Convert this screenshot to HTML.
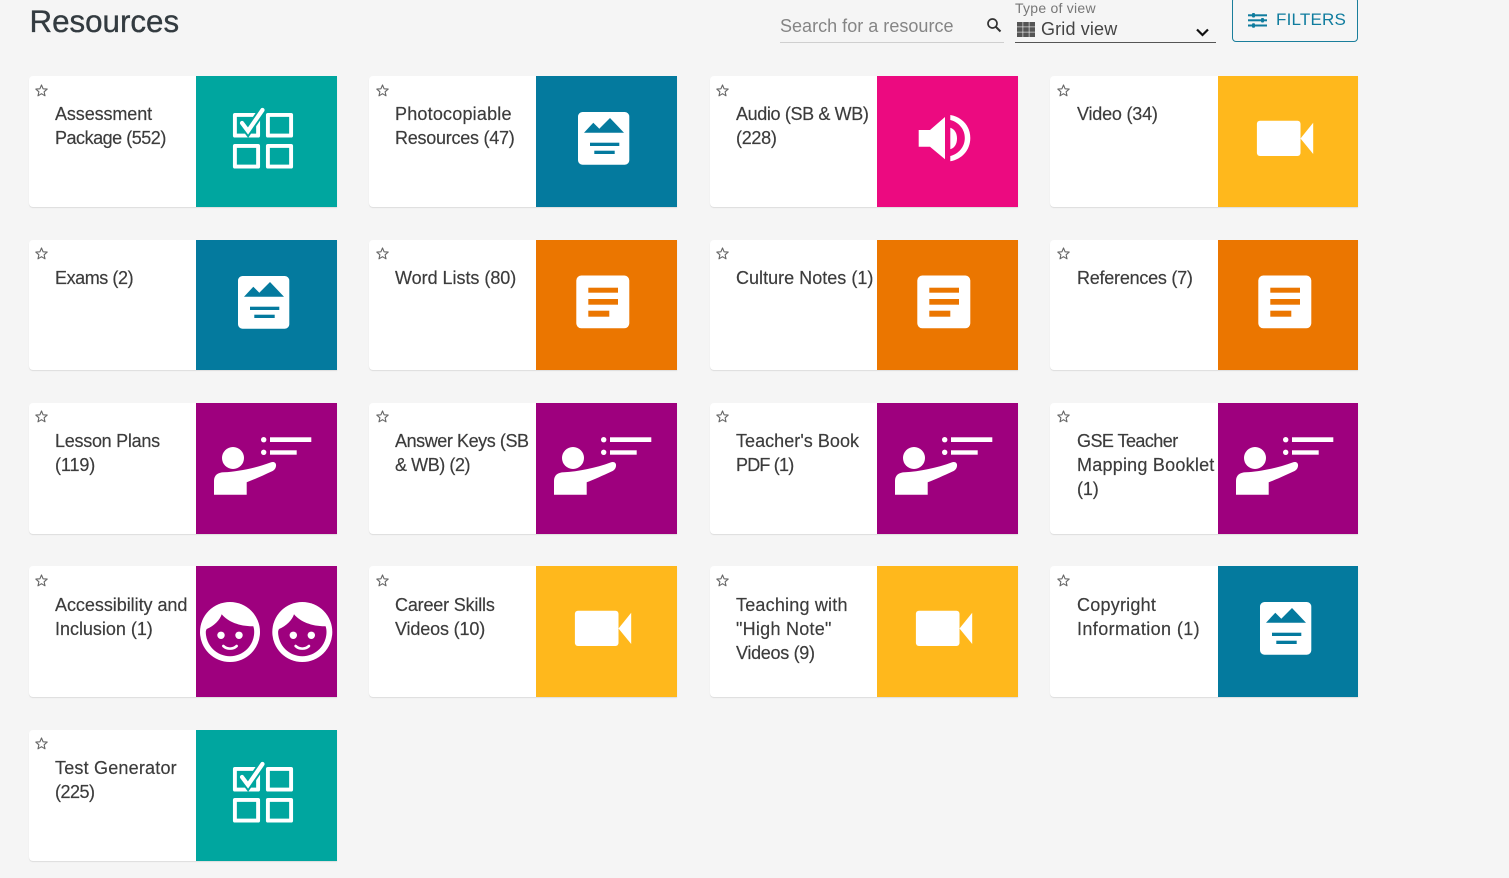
<!DOCTYPE html>
<html lang="en"><head><meta charset="utf-8"><title>Resources</title>
<style>
html,body{margin:0;padding:0;background:#f5f5f5}
body{width:1509px;height:878px;overflow:hidden;position:relative;font-family:"Liberation Sans",sans-serif;color:#3c3c3c}
.abs{position:absolute;white-space:nowrap}
h1{position:absolute;left:29.500px;top:3px;margin:0;font-size:31.300px;line-height:38px;font-weight:400;color:#333b40;white-space:nowrap;-webkit-text-stroke:.35px #333b40}
.card{position:absolute;width:308px;height:131px;background:#fff;border-radius:4px 0 0 4px;box-shadow:0 1px 1px rgba(0,0,0,.1)}
.card svg.star{position:absolute;left:6px;top:8px;width:13px;height:13px}
.up svg.star{top:7px}
.c2 svg.star,.c4 svg.star{left:7px}
.card .t{position:absolute;left:26px;top:26px;font-size:18px;line-height:24px;color:#3c3c3c;white-space:nowrap;-webkit-text-stroke:.18px #3c3c3c}
.c4 .t{left:27px}
.r4 .t{top:27px}
.card .t span{display:block}
.card svg.p{position:absolute;left:167px;top:0;width:141px;height:131px;display:block}
.c4 svg.p{left:168px;width:140px}
.r2{height:130px}
.r2 svg.p{height:130px}
</style></head><body>
<svg width="0" height="0" style="position:absolute">
<defs>
<g id="star"><polygon points="6.500,1 8.100,4.800 12.200,5.100 9.100,7.800 10,11.800 6.500,9.700 3,11.800 3.900,7.800 .8,5.100 4.900,4.800" fill="none" stroke="#666" stroke-width="1.100" stroke-linejoin="round"/></g>
<g id="check"><g fill="none" stroke="#fff" stroke-width="3.900" stroke-linejoin="round"><rect x="38.900" y="38.900" width="23.200" height="20.700"/><rect x="71.900" y="38.900" width="23.200" height="20.700"/><rect x="38.900" y="69.900" width="23.200" height="20.700"/><rect x="71.900" y="69.900" width="23.200" height="20.700"/></g><path d="M46 47l6 8L66.500 34" fill="none" stroke="#00a69f" stroke-width="8"/><path d="M46 47l6 8L66.500 34" fill="none" stroke="#fff" stroke-width="4.200" stroke-linecap="round"/></g>
<g id="photo"><rect x="42" y="36" width="51.300" height="52.700" rx="4.500" fill="#fff"/><path d="M48 56.700L57.300 46.700 63.300 52.700 74 42 88 56.700Z" fill="#047a9e"/><rect x="54" y="66.700" width="29.300" height="3.300" fill="#047a9e"/><rect x="58.300" y="74.700" width="20.400" height="3.300" fill="#047a9e"/></g>
<g id="audio" fill="#fff"><path d="M41.700 54H53L68 41V83.300L53 70.700H41.700Z"/><path d="M73.300 39C85 41 93.300 50 93.300 62S85 83.300 73.300 85.300V80C81.500 78 87.800 71 87.800 62S81.500 46 73.300 44Z"/><path d="M73.300 51.700C77.500 53 80 57 80 62.500S77.500 72 73.300 73.300Z"/></g>
<g id="video" fill="#fff"><rect x="38.900" y="44.700" width="43.600" height="35.300" rx="3"/><path d="M82.500 62.500L95.200 46.700V78Z"/></g>
<g id="doc"><rect x="40.300" y="35.500" width="53" height="52.800" rx="5" fill="#fff"/><g fill="#eb7600"><rect x="52.300" y="47.700" width="29.700" height="5"/><rect x="52.300" y="59" width="29.700" height="5.700"/><rect x="52.300" y="70.700" width="21" height="6"/></g></g>
<g id="teacher" fill="#fff"><circle cx="37" cy="55" r="11"/><path d="M18 91.700V78C18 72 22 69.500 28 69.300C42 68.500 60 65 74.500 59.500C78 58 80.500 60 80 63C79.800 65.500 78 67.500 75.500 68.500C67 72.500 58 76.500 50.700 79.300V91.700Z"/><circle cx="67.700" cy="36.700" r="2.700"/><circle cx="67.700" cy="49.300" r="2.700"/><rect x="74" y="34.300" width="41.300" height="4.700"/><rect x="74" y="47.300" width="26.700" height="4.400"/></g>
<g id="face"><circle cx="34" cy="66" r="30" fill="#fff"/><path d="M10.700 63C18 60 24 54 25.700 48.300C32 56 44 60.500 57.300 60.300C58 62.500 58.200 64 58.200 66A24.200 24.200 0 0 1 9.800 66C9.800 65 10.200 64 10.700 63Z" fill="#9e007e"/><circle cx="25" cy="69.300" r="3.700" fill="#fff"/><circle cx="43" cy="69.300" r="3.700" fill="#fff"/><path d="M27.300 80C31 83.500 37 83.500 40.700 80" fill="none" stroke="#fff" stroke-width="2.600" stroke-linecap="round"/></g>
</defs></svg>

<h1>Resources</h1>

<div class="abs" style="left:780px;top:15px;font-size:18px;line-height:22px;color:#858585;letter-spacing:.02px">Search for a resource</div>
<div class="abs" style="left:780px;top:42px;width:224px;height:1px;background:#cfcfcf"></div>
<svg class="abs" style="left:986px;top:17px" width="16" height="16" viewBox="0 0 16 16"><circle cx="6.500" cy="6.500" r="4.500" fill="none" stroke="#333" stroke-width="1.700"/><path d="M10 10l4.500 4.500" stroke="#333" stroke-width="2"/></svg>
<div class="abs" style="left:1015px;top:0;font-size:14px;line-height:16px;color:#777;letter-spacing:.25px">Type of view</div>
<svg class="abs" style="left:1017px;top:22px" width="18" height="15" viewBox="0 0 18 15" fill="#555"><rect width="5.600" height="4.600"/><rect x="6.200" width="5.600" height="4.600"/><rect x="12.400" width="5.600" height="4.600"/><rect y="5.200" width="5.600" height="4.600"/><rect x="6.200" y="5.200" width="5.600" height="4.600"/><rect x="12.400" y="5.200" width="5.600" height="4.600"/><rect y="10.400" width="5.600" height="4.600"/><rect x="6.200" y="10.400" width="5.600" height="4.600"/><rect x="12.400" y="10.400" width="5.600" height="4.600"/></svg>
<div class="abs" style="left:1041px;top:18px;font-size:18px;line-height:22px;color:#444;letter-spacing:.15px">Grid view</div>
<svg class="abs" style="left:1195px;top:27px" width="15" height="11" viewBox="0 0 15 11"><path d="M2 2.500l5.500 5.500L13 2.500" fill="none" stroke="#111" stroke-width="2.200"/></svg>
<div class="abs" style="left:1015px;top:42px;width:201px;height:1px;background:#555"></div>
<div class="abs" style="left:1232px;top:-3px;width:124px;height:43px;border:1px solid #1a7e9b;border-radius:4px"></div>
<svg class="abs" style="left:1247px;top:12px" width="21" height="17" viewBox="0 0 21 17" fill="#0f7c9e"><rect x="1" y="2.300" width="19" height="2"/><rect x="1" y="7.300" width="19" height="2"/><rect x="1" y="12.500" width="19" height="2"/><rect x="5" y="1" width="3" height="4.500" rx="1"/><rect x="14" y="6" width="3" height="4.500" rx="1"/><rect x="5" y="11.300" width="3" height="4.500" rx="1"/></svg>
<div class="abs" style="left:1276px;top:9px;font-size:17px;line-height:22px;color:#0f7c9e;letter-spacing:.2px">FILTERS</div>

<!-- Row 1 -->
<div class="card c1" style="left:29px;top:76px"><svg class="star" viewBox="0 0 13 13"><use href="#star"/></svg><div class="t"><span style="letter-spacing:-.1px">Assessment</span><span style="letter-spacing:-.48px">Package (552)</span></div><svg class="p" viewBox="0 0 141 131"><rect width="141" height="131" fill="#00a69f"/><use href="#check"/></svg></div>
<div class="card c2" style="left:369px;top:76px"><svg class="star" viewBox="0 0 13 13"><use href="#star"/></svg><div class="t"><span style="letter-spacing:.2px">Photocopiable</span><span style="letter-spacing:-.25px">Resources (47)</span></div><svg class="p" viewBox="0 0 141 131"><rect width="141" height="131" fill="#047a9e"/><use href="#photo"/></svg></div>
<div class="card c3" style="left:710px;top:76px"><svg class="star" viewBox="0 0 13 13"><use href="#star"/></svg><div class="t"><span style="letter-spacing:-.37px">Audio (SB &amp; WB)</span><span style="letter-spacing:-.3px">(228)</span></div><svg class="p" viewBox="0 0 141 131"><rect width="141" height="131" fill="#ec0a80"/><use href="#audio"/></svg></div>
<div class="card c4" style="left:1050px;top:76px"><svg class="star" viewBox="0 0 13 13"><use href="#star"/></svg><div class="t"><span style="letter-spacing:-.2px">Video (34)</span></div><svg class="p" viewBox="0 0 140 131"><rect width="141" height="131" fill="#ffb81c"/><use href="#video"/></svg></div>

<!-- Row 2 -->
<div class="card c1 r2 up" style="left:29px;top:240px"><svg class="star" viewBox="0 0 13 13"><use href="#star"/></svg><div class="t"><span style="letter-spacing:-.43px">Exams (2)</span></div><svg class="p" viewBox="0 0 141 130"><rect width="141" height="131" fill="#047a9e"/><use href="#photo"/></svg></div>
<div class="card c2 r2 up" style="left:369px;top:240px"><svg class="star" viewBox="0 0 13 13"><use href="#star"/></svg><div class="t"><span style="letter-spacing:-.03px">Word Lists (80)</span></div><svg class="p" viewBox="0 0 141 130"><rect width="141" height="131" fill="#eb7600"/><use href="#doc"/></svg></div>
<div class="card c3 r2 up" style="left:710px;top:240px"><svg class="star" viewBox="0 0 13 13"><use href="#star"/></svg><div class="t"><span style="letter-spacing:.02px">Culture Notes (1)</span></div><svg class="p" viewBox="0 0 141 130"><rect width="141" height="131" fill="#eb7600"/><use href="#doc"/></svg></div>
<div class="card c4 r2 up" style="left:1050px;top:240px"><svg class="star" viewBox="0 0 13 13"><use href="#star"/></svg><div class="t"><span style="letter-spacing:-.24px">References (7)</span></div><svg class="p" viewBox="0 0 140 130"><rect width="141" height="131" fill="#eb7600"/><use href="#doc"/></svg></div>

<!-- Row 3 -->
<div class="card c1 up" style="left:29px;top:403px"><svg class="star" viewBox="0 0 13 13"><use href="#star"/></svg><div class="t"><span style="letter-spacing:-.27px">Lesson Plans</span><span style="letter-spacing:-.1px">(119)</span></div><svg class="p" viewBox="0 0 141 131"><rect width="141" height="131" fill="#9e007e"/><use href="#teacher"/></svg></div>
<div class="card c2 up" style="left:369px;top:403px"><svg class="star" viewBox="0 0 13 13"><use href="#star"/></svg><div class="t"><span style="letter-spacing:-.43px">Answer Keys (SB</span><span style="letter-spacing:-.43px">&amp; WB) (2)</span></div><svg class="p" viewBox="0 0 141 131"><rect width="141" height="131" fill="#9e007e"/><use href="#teacher"/></svg></div>
<div class="card c3 up" style="left:710px;top:403px"><svg class="star" viewBox="0 0 13 13"><use href="#star"/></svg><div class="t"><span style="letter-spacing:.04px">Teacher's Book</span><span style="letter-spacing:-.8px">PDF (1)</span></div><svg class="p" viewBox="0 0 141 131"><rect width="141" height="131" fill="#9e007e"/><use href="#teacher"/></svg></div>
<div class="card c4 up" style="left:1050px;top:403px"><svg class="star" viewBox="0 0 13 13"><use href="#star"/></svg><div class="t"><span style="letter-spacing:-.55px">GSE Teacher</span><span style="letter-spacing:.23px">Mapping Booklet</span><span style="letter-spacing:-.1px">(1)</span></div><svg class="p" viewBox="0 0 140 131"><rect width="141" height="131" fill="#9e007e"/><use href="#teacher"/></svg></div>

<!-- Row 4 -->
<div class="card c1 r4" style="left:29px;top:566px"><svg class="star" viewBox="0 0 13 13"><use href="#star"/></svg><div class="t"><span style="letter-spacing:-.04px">Accessibility and</span><span style="letter-spacing:-.02px">Inclusion (1)</span></div><svg class="p" viewBox="0 0 141 131"><rect width="141" height="131" fill="#9e007e"/><use href="#face"/><use href="#face" x="72.300"/></svg></div>
<div class="card c2 r4" style="left:369px;top:566px"><svg class="star" viewBox="0 0 13 13"><use href="#star"/></svg><div class="t"><span style="letter-spacing:-.18px">Career Skills</span><span style="letter-spacing:-.15px">Videos (10)</span></div><svg class="p" viewBox="0 0 141 131"><rect width="141" height="131" fill="#ffb81c"/><use href="#video"/></svg></div>
<div class="card c3 r4" style="left:710px;top:566px"><svg class="star" viewBox="0 0 13 13"><use href="#star"/></svg><div class="t"><span style="letter-spacing:.2px">Teaching with</span><span style="letter-spacing:.26px">"High Note"</span><span style="letter-spacing:-.3px">Videos (9)</span></div><svg class="p" viewBox="0 0 141 131"><rect width="141" height="131" fill="#ffb81c"/><use href="#video"/></svg></div>
<div class="card c4 r4" style="left:1050px;top:566px"><svg class="star" viewBox="0 0 13 13"><use href="#star"/></svg><div class="t"><span style="letter-spacing:.23px">Copyright</span><span style="letter-spacing:.4px">Information (1)</span></div><svg class="p" viewBox="0 0 140 131"><rect width="141" height="131" fill="#047a9e"/><use href="#photo"/></svg></div>

<!-- Row 5 -->
<div class="card c1 up" style="left:29px;top:730px"><svg class="star" viewBox="0 0 13 13"><use href="#star"/></svg><div class="t"><span style="letter-spacing:.2px">Test Generator</span><span style="letter-spacing:-.5px">(225)</span></div><svg class="p" viewBox="0 0 141 131"><rect width="141" height="131" fill="#00a69f"/><use href="#check"/></svg></div>
</body></html>
